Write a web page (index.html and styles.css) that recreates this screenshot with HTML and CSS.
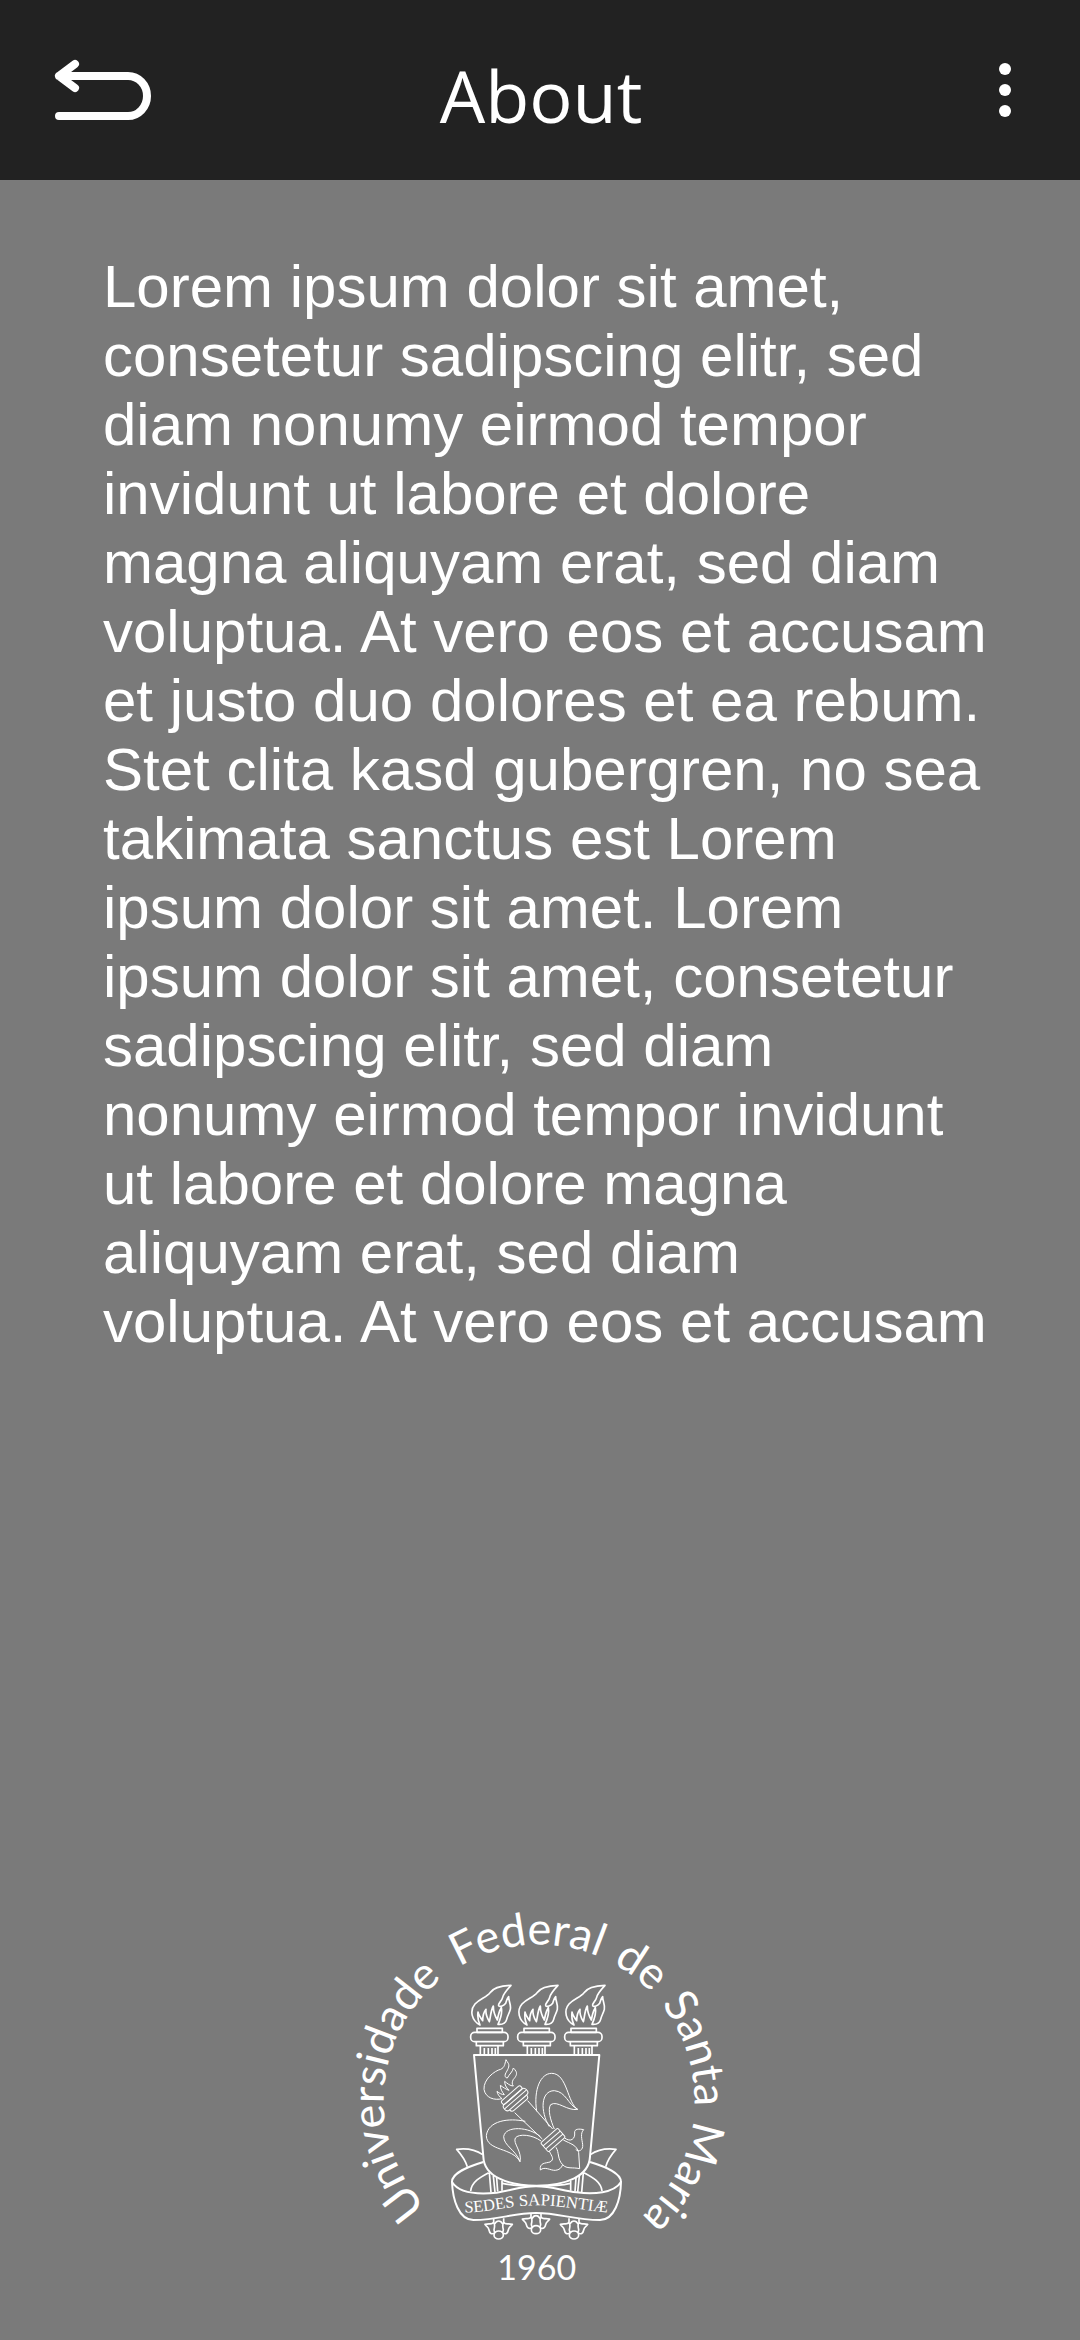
FILE: index.html
```html
<!DOCTYPE html>
<html lang="en">
<head>
<meta charset="utf-8">
<meta name="viewport" content="width=device-width, initial-scale=1">
<title>About</title>
<link rel="stylesheet" href="styles.css">
</head>
<body>
<header class="bar">
  <button class="icon-button back" type="button" aria-label="Back">
    <svg width="104" height="64" viewBox="51 58 104 64" fill="none" stroke="#fff" stroke-width="8" stroke-linecap="round" stroke-linejoin="round">
      <path d="M75 64 59 76 75 88M59 76H128A19 20 0 0 1 128 116H59"/>
      <path d="M62 76H70"/>
    </svg>
  </button>
  <h1 class="title">About</h1>
  <button class="icon-button more" type="button" aria-label="More options">
    <svg width="24" height="64" viewBox="0 0 24 64" fill="#fff">
      <circle cx="12" cy="11" r="6"/><circle cx="12" cy="32" r="6"/><circle cx="12" cy="53" r="6"/>
    </svg>
  </button>
</header>
<main class="content">
  <p class="copy">Lorem ipsum dolor sit amet, consetetur sadipscing elitr, sed diam nonumy eirmod tempor invidunt ut labore et dolore magna aliquyam erat, sed diam voluptua. At vero eos et accusam et justo duo dolores et ea rebum. Stet clita kasd gubergren, no sea takimata sanctus est Lorem ipsum dolor sit amet. Lorem ipsum dolor sit amet, consetetur sadipscing elitr, sed diam nonumy eirmod tempor invidunt ut labore et dolore magna aliquyam erat, sed diam voluptua. At vero eos et accusam</p>
</main>
<footer class="footer">
  <svg class="crest" width="400" height="410" viewBox="0 0 1200 1230" role="img" aria-label="Universidade Federal de Santa Maria, 1960">
    <defs>
      <path id="ring" d="M597 1096A466 466 0 0 1 597 164A466 466 0 0 1 597 1096"/>
      <path id="motto" d="M358 966C430 972 490 948 586 946C676 946 736 964 818 968"/>
      <g id="column">
        <path d="M420 405C395 392 388 362 405 342C420 325 440 322 450 308C462 290 490 287 513 286C500 300 490 312 488 322C485 335 473 340 476 347C480 352 492 347 497 340C500 333 500 326 506 320C506 335 514 345 511 358C508 370 502 378 500 388C497 400 485 404 474 403C480 390 488 372 484 353C478 362 474 378 472 390C466 380 460 365 460 348C452 362 452 380 448 395C442 385 436 372 438 358C430 368 428 380 428 392C422 384 416 376 414 366C412 380 414 392 420 405Z"/>
        <rect x="411" y="415" width="76" height="12"/>
        <rect x="392" y="427" width="112" height="28" rx="12"/>
        <path d="M409 456V467H490V456M421 468V493M474 468V493M433 474V493M445 474V493M456 474V493M466 474V493"/>
      </g>
      <g id="foot">
        <path d="M-15-17V-6C-18 4-28-3-41 1C-36 10-31 7-29 18C-27 29-21 31-13 28M15-17V-6C18 4 28-3 41 1C36 10 31 7 29 18C27 29 21 31 13 28M-15-4C-10 2-12 9-14 17C-14 22-12 24-10 27M15-4C10 2 12 9 14 17C14 22 12 24 10 27M-12 0C-6-12 6-12 12 0"/>
        <ellipse cy="33" rx="14" ry="12"/>
      </g>
    </defs>
    <g class="ring-text">
      <text><textPath href="#ring" startOffset="764">Universidade</textPath></text>
      <text><textPath href="#ring" startOffset="1430">Federal</textPath></text>
      <text><textPath href="#ring" startOffset="1768">de</textPath></text>
      <text><textPath href="#ring" startOffset="2050">Santa</textPath></text>
      <text><textPath href="#ring" startOffset="2424">Maria</textPath></text>
    </g>
    <g class="line">
      <use href="#column"/>
      <use href="#column" x="141"/>
      <use href="#column" x="282"/>
      <path class="bold" d="M402 495H778L750 800C747 858 680 887 590 887C500 887 432 858 430 800Z"/>
    </g>
    <!-- torch and lily inside the shield -->
    <g class="line thin" transform="translate(360 480)">
      <path d="M138 29C134 44 134 52 122 58C104 62 70 88 72 118C76 144 104 152 126 146C118 140 112 132 111 124C118 130 126 134 133 134C126 126 121 116 121 106C130 112 138 118 147 121C138 112 134 104 134 94C142 100 150 108 160 108C155 102 156 96 160 88C168 80 172 72 168 64C166 60 162 56 160 54C158 66 148 72 142 84C136 84 134 78 136 72C142 60 150 50 145 40C143 36 140 34 138 29Z"/>
      <g transform="translate(167 149) rotate(-41)">
        <rect x="-38" y="-25" width="76" height="14" rx="6"/>
        <rect x="-44" y="-12" width="88" height="23" rx="10"/>
        <path d="M-44-1H44M-34 11C-34 18-30 21-24 21H26C32 21 34 18 34 11"/>
      </g>
      <path d="M203 152L278 237M164 188L247 267"/>
      <path d="M230 184C220 118 242 70 275 70C322 70 322 160 353 178C322 184 292 150 272 164C262 178 272 212 283 237"/>
      <path d="M268 230C240 184 242 122 283 122C318 125 324 164 353 178"/>
      <path d="M196 214C146 203 84 212 79 257C80 304 158 292 180 335C187 304 158 280 166 264C176 250 218 254 243 273"/>
      <path d="M241 260C208 230 136 226 131 260C132 288 166 298 180 335"/>
      <g transform="translate(279 270) rotate(-41)">
        <rect x="-34" y="-18" width="68" height="36" rx="4"/>
        <path d="M-34-6H34M-34 6H34"/>
      </g>
      <path d="M314 264C332 278 346 266 344 249C342 236 358 236 371 239C360 250 366 268 368 284C370 300 356 308 347 298"/>
      <path d="M310 270C332 282 350 284 356 308L359 356C338 351 320 358 308 344C292 328 298 308 288 292"/>
      <path d="M268 304C276 320 284 328 270 336C256 340 238 338 241 360C254 348 272 362 286 361C298 360 304 354 308 344"/>
    </g>
    <!-- ribbon -->
    <g class="line" transform="translate(300 720)">
      <path class="bold" d="M36 156C36 128 84 110 130 96M543 156C543 128 496 110 450 96"/>
      <path class="bold" d="M36 156C58 192 120 193 170 188C220 180 244 169 288 169C334 169 360 180 410 187C460 193 522 190 543 156C542 208 524 270 480 270C400 270 360 249 288 249C216 249 180 270 100 270C56 270 38 208 36 156Z"/>
      <path d="M128 74C108 60 80 54 50 58C66 76 76 90 82 110M451 74C471 60 498 54 528 58C512 76 503 90 497 110M92 183C95 156 120 142 146 128M486 183C483 156 458 142 432 128M148 128L153 187M160 138L165 186M170 144L173 184M186 152V182M430 128L425 187M418 138L413 186M408 144L405 184M392 152V182M188 160C220 168 250 168 288 168C328 168 360 168 391 160"/>
      <use href="#foot" x="176" y="282"/>
      <use href="#foot" x="288" y="266"/>
      <use href="#foot" x="402" y="282"/>
    </g>
    <text class="motto"><textPath href="#motto" startOffset="50%">SEDES SAPIENTIÆ</textPath></text>
    <text class="year" x="590" y="1170">1960</text>
  </svg>
</footer>
</body>
</html>
```
FILE: styles.css
```css
* {
  box-sizing: border-box;
}

body {
  margin: 0;
  min-height: 100vh;
  display: flex;
  flex-direction: column;
  background: #7a7a7a;
  color: #fff;
  font-family: "Liberation Sans", Arial, sans-serif;
}

.bar {
  display: grid;
  grid-template-columns: 1fr auto 1fr;
  align-items: center;
  height: 180px;
  padding: 0 63px 0 51px;
  background: #222;
}

.icon-button {
  display: flex;
  padding: 0;
  border: 0;
  background: none;
  cursor: pointer;
}

.back {
  justify-self: start;
}

.more {
  justify-self: end;
}

.title {
  margin: 0;
  padding: 10px 0 0 14px;
  font: 400 72px/96px "Open Sans", "Noto Sans", sans-serif;
}

.content {
  padding: 72px 88px 48px 103px;
}

.copy {
  margin: 0;
  font-size: 60px;
  line-height: 69px;
}

.footer {
  display: flex;
  justify-content: center;
  margin-top: auto;
  padding-bottom: 40px;
}

.crest {
  display: block;
  fill: #fff;
}

.ring-text {
  font: 400 135px Lato, sans-serif;
  text-anchor: middle;
}

.motto {
  font: 400 50px "Liberation Serif", serif;
  text-anchor: middle;
}

.year {
  font: 400 102px Lato, sans-serif;
  text-anchor: middle;
}

.line {
  fill: none;
  stroke: #fff;
  stroke-width: 5;
  stroke-linejoin: round;
}

.thin {
  stroke-width: 3;
}

.bold {
  stroke-width: 6;
}
```
